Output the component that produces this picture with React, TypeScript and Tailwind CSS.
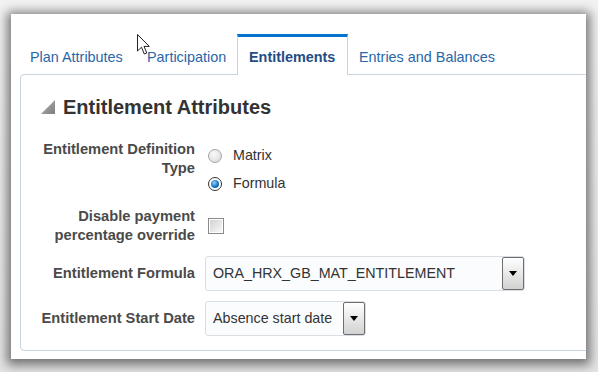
import type { ReactNode } from "react";

function Radio({ checked }: { checked?: boolean }) {
  if (checked) {
    return (
      <span className="flex h-[14px] w-[14px] items-center justify-center rounded-full border border-[#333] bg-white">
        <span className="h-[8px] w-[8px] rounded-full bg-[radial-gradient(circle_at_40%_35%,#8fd0ff,#1677c4_55%,#0a3f70)]" />
      </span>
    );
  }
  return (
    <span className="h-[14px] w-[14px] rounded-full border border-[#a5a5a5] bg-[radial-gradient(circle_at_40%_35%,#fbfbfb,#d6d6d6)]" />
  );
}

function Select({ value, width }: { value: string; width: string }) {
  return (
    <div className={`flex h-[35px] ${width} rounded-[3px] border border-[#d8dee4] bg-[#fbfcfd]`}>
      <div className="flex flex-1 items-center pl-[7px] text-[14.3px] text-[#333]">{value}</div>
      <div className="flex w-[22px] items-center justify-center rounded-[2px] border border-[#6e6e6e] bg-gradient-to-b from-white to-[#d2d2d2]">
        <span className="h-0 w-0 border-x-[4px] border-t-[5px] border-x-transparent border-t-black" />
      </div>
    </div>
  );
}

function Row({ label, children, className }: { label: ReactNode; children: ReactNode; className?: string }) {
  return (
    <div className={`flex ${className ?? ""}`}>
      <div className="w-[174px] shrink-0 text-right text-[14.7px] font-bold leading-[19px] text-[#4a4a4a]">{label}</div>
      <div className="ml-[10px]">{children}</div>
    </div>
  );
}

export default function App() {
  return (
    <div className="relative h-[372px] w-[598px] overflow-hidden bg-[linear-gradient(to_bottom,#f2f2f2,#e4e4e4)] pl-[11px] pt-[14px] font-['Liberation_Sans',Arial,sans-serif]">
      <div className="h-[345px] w-[575px] overflow-hidden bg-white pl-[9px] pt-[20px] shadow-[0_2px_10px_4px_rgba(0,0,0,0.5)]">
        {/* tabs */}
        <div className="relative z-10 flex items-end text-[14.4px]">
          <div className="flex h-[40px] w-[116px] items-center pl-[10px] pt-[7px] text-[#2a66a8]">Plan Attributes</div>
          <div className="flex h-[40px] w-[101px] items-center pl-[11px] pt-[7px] text-[#2a66a8]">Participation</div>
          <div className="-mb-px flex h-[41px] w-[111px] items-center border-x border-t-[3px] border-x-[#c8d4df] border-t-[#0572ce] bg-white pl-[11px] pt-[4px] font-bold text-[#1f4d85]">
            Entitlements
          </div>
          <div className="flex h-[40px] items-center pl-[11px] pt-[7px] text-[#2a66a8]">Entries and Balances</div>
        </div>

        {/* content */}
        <div className="-mr-[4px] rounded-l-[4px] border border-[#c8d4df] pb-[14px] pt-[20px]">
          <div className="flex h-[24px] items-center pl-[20px]">
            <svg width="14" height="14" viewBox="0 0 14 14">
              <defs>
                <linearGradient id="tri" x1="0" y1="0" x2="1" y2="1">
                  <stop offset="0" stopColor="#b5b5b5" />
                  <stop offset="1" stopColor="#7d7d7d" />
                </linearGradient>
              </defs>
              <polygon points="0,14 14,0 14,14" fill="url(#tri)" />
            </svg>
            <h2 className="ml-[8px] text-[20px] font-bold text-[#333]">Entitlement Attributes</h2>
          </div>

          <Row className="mt-[21px]" label={<>Entitlement Definition<br />Type</>}>
            <div className="pt-[2px] text-[14.3px] text-[#333]">
              <label className="flex h-[28px] items-center pl-[3px]">
                <Radio />
                <span className="ml-[11px]">Matrix</span>
              </label>
              <label className="flex h-[28px] items-center pl-[3px]">
                <Radio checked />
                <span className="ml-[11px]">Formula</span>
              </label>
            </div>
          </Row>

          <Row className="mt-[9px] items-center" label={<>Disable payment<br />percentage override</>}>
            <div className="ml-[3px] flex h-[16px] w-[16px] items-center justify-center border border-[#8a8a8a] bg-white">
              <span className="h-[12px] w-[12px] bg-gradient-to-br from-[#d2d2d2] to-[#f8f8f8]" />
            </div>
          </Row>

          <Row className="mt-[11px] items-center" label="Entitlement Formula">
            <Select value="ORA_HRX_GB_MAT_ENTITLEMENT" width="w-[320px]" />
          </Row>

          <Row className="mt-[10px] items-center" label="Entitlement Start Date">
            <Select value="Absence start date" width="w-[161px]" />
          </Row>
        </div>
      </div>

      {/* mouse pointer */}
      <svg className="absolute left-[137px] top-[34px]" width="14" height="22" viewBox="0 0 14 22">
        <path d="M0.5 0.5 L0.5 17 L4.5 13.2 L7.3 20 L9.8 19 L7 12.4 L12.3 12.4 Z" fill="white" stroke="#222" strokeWidth="1" strokeLinejoin="round" />
      </svg>
    </div>
  );
}
